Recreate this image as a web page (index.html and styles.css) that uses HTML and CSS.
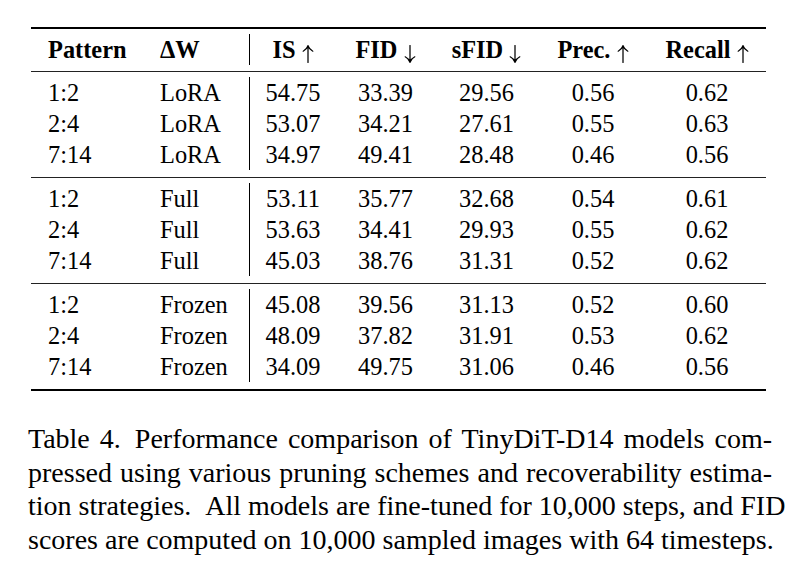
FILE: index.html
```html
<!DOCTYPE html>
<html>
<head>
<meta charset="utf-8">
<link rel="stylesheet" href="styles.css">
</head>
<body>
<div class="page">
  <div class="tbl">
    <div class="sec head">
      <div class="c c1 b">Pattern</div><div class="c c2 b">ΔW</div><div class="c n bar b">IS <svg class="ar" viewBox="0 0 12 18" width="12" height="18"><path d="M6 17.5V1M1.2 6.2Q4.8 4.4 6 0.8Q7.2 4.4 10.8 6.2"/></svg></div><div class="c n b">FID <svg class="ar" viewBox="0 0 12 18" width="12" height="18"><path d="M6 0.5V17M1.2 11.8Q4.8 13.6 6 17.2Q7.2 13.6 10.8 11.8"/></svg></div><div class="c n b">sFID <svg class="ar" viewBox="0 0 12 18" width="12" height="18"><path d="M6 0.5V17M1.2 11.8Q4.8 13.6 6 17.2Q7.2 13.6 10.8 11.8"/></svg></div><div class="c n b">Prec. <svg class="ar" viewBox="0 0 12 18" width="12" height="18"><path d="M6 17.5V1M1.2 6.2Q4.8 4.4 6 0.8Q7.2 4.4 10.8 6.2"/></svg></div><div class="c n b">Recall <svg class="ar" viewBox="0 0 12 18" width="12" height="18"><path d="M6 17.5V1M1.2 6.2Q4.8 4.4 6 0.8Q7.2 4.4 10.8 6.2"/></svg></div>
    </div>
    <div class="sec">
      <div class="c c1">1:2</div><div class="c c2">LoRA</div><div class="c n bar">54.75</div><div class="c n">33.39</div><div class="c n">29.56</div><div class="c n">0.56</div><div class="c n">0.62</div>
      <div class="c c1">2:4</div><div class="c c2">LoRA</div><div class="c n bar">53.07</div><div class="c n">34.21</div><div class="c n">27.61</div><div class="c n">0.55</div><div class="c n">0.63</div>
      <div class="c c1">7:14</div><div class="c c2">LoRA</div><div class="c n bar">34.97</div><div class="c n">49.41</div><div class="c n">28.48</div><div class="c n">0.46</div><div class="c n">0.56</div>
    </div>
    <div class="sec">
      <div class="c c1">1:2</div><div class="c c2">Full</div><div class="c n bar">53.11</div><div class="c n">35.77</div><div class="c n">32.68</div><div class="c n">0.54</div><div class="c n">0.61</div>
      <div class="c c1">2:4</div><div class="c c2">Full</div><div class="c n bar">53.63</div><div class="c n">34.41</div><div class="c n">29.93</div><div class="c n">0.55</div><div class="c n">0.62</div>
      <div class="c c1">7:14</div><div class="c c2">Full</div><div class="c n bar">45.03</div><div class="c n">38.76</div><div class="c n">31.31</div><div class="c n">0.52</div><div class="c n">0.62</div>
    </div>
    <div class="sec">
      <div class="c c1">1:2</div><div class="c c2">Frozen</div><div class="c n bar">45.08</div><div class="c n">39.56</div><div class="c n">31.13</div><div class="c n">0.52</div><div class="c n">0.60</div>
      <div class="c c1">2:4</div><div class="c c2">Frozen</div><div class="c n bar">48.09</div><div class="c n">37.82</div><div class="c n">31.91</div><div class="c n">0.53</div><div class="c n">0.62</div>
      <div class="c c1">7:14</div><div class="c c2">Frozen</div><div class="c n bar">34.09</div><div class="c n">49.75</div><div class="c n">31.06</div><div class="c n">0.46</div><div class="c n">0.56</div>
    </div>
  </div>
  <div class="caption">
    <span class="ln">Table 4.&ensp;Performance comparison of TinyDiT-D14 models com-</span>
    <span class="ln">pressed using various pruning schemes and recoverability estima-</span>
    <span class="ln">tion strategies.&ensp;All models are fine-tuned for 10,000 steps, and FID</span>
    <span class="ln last">scores are computed on 10,000 sampled images with 64 timesteps.</span>
  </div>
</div>
</body>
</html>
```

FILE: styles.css
```css
html, body {
  margin: 0;
  padding: 0;
  background: #fff;
}

.page {
  padding-top: 27px;
  color: #000;
}

.tbl {
  margin-left: 31px;
  width: 735px;
  border-top: 2px solid #000;
  border-bottom: 2px solid #000;
}

.sec {
  display: grid;
  grid-template-columns: 114px 104px 87px 99px 103px 110px 118px;
  padding: 5px 0 7px;
  border-top: 1px solid #222;
}

.sec.head {
  border-top: none;
  padding: 5px 0 6px;
}

.c {
  box-sizing: border-box;
  height: 31px;
  line-height: 31px;
  font-family: "Liberation Serif", Tinos, "Times New Roman", Times, "DejaVu Serif", serif;
  font-size: 24.4px;
  white-space: nowrap;
}

.c1 { padding-left: 17px; }
.c2 { padding-left: 15px; }
.n { text-align: center; }
.bar { border-left: 1px solid #000; }
.b { font-weight: bold; }

.ar {
  display: inline-block;
  vertical-align: -5px;
  fill: none;
  stroke: #000;
  stroke-width: 1.25;
  stroke-linecap: round;
}

.caption {
  margin: 31px 0 0 28px;
  width: 744px;
  font-family: "Liberation Serif", Tinos, "Times New Roman", Times, "DejaVu Serif", serif;
  font-size: 28px;
  line-height: 33.5px;
}

.ln {
  display: block;
  text-align: justify;
  text-align-last: justify;
  white-space: nowrap;
}

.ln.last {
  text-align-last: left;
}
```
